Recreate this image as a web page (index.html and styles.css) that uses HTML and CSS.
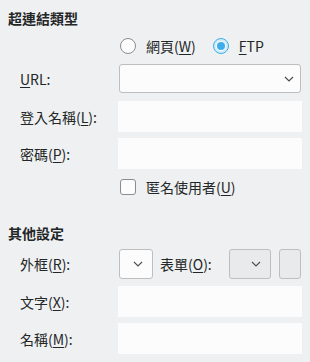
FILE: index.html
```html
<!DOCTYPE html>
<html lang="zh-Hant">
<head>
<meta charset="utf-8">
<link rel="stylesheet" href="styles.css">
</head>
<body>
<div class="page">
  <div class="section-title">超連結類型</div>

  <div class="row row-radio">
    <div class="label"></div>
    <div class="field radios">
      <span class="radio"></span><span class="opt-text">網頁(<u>W</u>)</span>
      <span class="radio checked"></span><span class="opt-text"><u>F</u>TP</span>
    </div>
  </div>

  <div class="row row-url">
    <div class="label"><u>U</u>RL:</div>
    <div class="field">
      <div class="combo wide">
        <svg class="chev" width="10" height="6" viewBox="0 0 10 6"><path d="M1 1 L5 5 L9 1" fill="none" stroke="#4d4d4d" stroke-width="1.2"/></svg>
      </div>
    </div>
  </div>

  <div class="row row-login">
    <div class="label">登入名稱(<u>L</u>):</div>
    <div class="field"><div class="input"></div></div>
  </div>

  <div class="row row-pass">
    <div class="label">密碼(<u>P</u>):</div>
    <div class="field"><div class="input"></div></div>
  </div>

  <div class="row row-check">
    <div class="label"></div>
    <div class="field checkrow">
      <span class="checkbox"></span><span class="opt-text">匿名使用者(<u>U</u>)</span>
    </div>
  </div>

  <div class="section-title second">其他設定</div>

  <div class="row row-frame">
    <div class="label">外框(<u>R</u>):</div>
    <div class="field framefield">
      <div class="combo small">
        <svg class="chev" width="10" height="6" viewBox="0 0 10 6"><path d="M1 1 L5 5 L9 1" fill="none" stroke="#4d4d4d" stroke-width="1.1"/></svg>
      </div>
      <span class="inline-label">表單(<u>O</u>):</span>
      <div class="combo btn">
        <svg class="chev" width="10" height="6" viewBox="0 0 10 6"><path d="M1 1 L5 5 L9 1" fill="none" stroke="#4d4d4d" stroke-width="1.1"/></svg>
      </div>
      <div class="btn-box"></div>
    </div>
  </div>

  <div class="row row-text">
    <div class="label">文字(<u>X</u>):</div>
    <div class="field"><div class="input"></div></div>
  </div>

  <div class="row row-name">
    <div class="label">名稱(<u>M</u>):</div>
    <div class="field"><div class="input"></div></div>
  </div>
</div>
</body>
</html>
```

FILE: styles.css
```css
html, body {
  margin: 0;
  padding: 0;
  background: #eff0f1;
}
body {
  font-family: "Noto Sans CJK TC", "Noto Sans", sans-serif;
  font-size: 14px;
  color: #232627;
  width: 310px;
  height: 362px;
  overflow: hidden;
}
.page {
  padding-top: 8px;
}
.section-title {
  font-weight: bold;
  line-height: 20px;
  height: 20px;
  padding-left: 8px;
}
.section-title.second {
  margin-top: 26px;
}
u {
  text-decoration: underline;
  text-underline-offset: 2px;
}
.row {
  display: flex;
  align-items: center;
  padding-left: 20px;
}
.label {
  width: 98px;
  flex: none;
  line-height: 20px;
  white-space: nowrap;
}
.field {
  width: 184px;
  flex: none;
  display: flex;
  align-items: center;
}
.row-radio { margin-top: 8px; height: 20px; }
.row-url { margin-top: 7px; height: 31px; }
.row-login { margin-top: 7px; height: 31px; }
.row-pass { margin-top: 6px; height: 31px; }
.row-check { margin-top: 8px; height: 20px; }
.row-frame { margin-top: 6px; height: 30px; }
.row-text { margin-top: 7px; height: 31px; }
.row-name { margin-top: 6px; height: 31px; }

.radios .radio {
  margin-left: 2px;
}
.radio {
  width: 14px;
  height: 14px;
  border: 1px solid #8a8d8f;
  border-radius: 50%;
  background: #fcfcfc;
  flex: none;
  position: relative;
}
.radio + .opt-text {
  margin-left: 10px;
}
.opt-text + .radio {
  margin-left: 17px;
}
.radio.checked {
  border-color: #3daee9;
  background: #d3ecf9;
}
.radio.checked::after {
  content: "";
  position: absolute;
  left: 3px;
  top: 3px;
  width: 8px;
  height: 8px;
  border-radius: 50%;
  background: #3daee9;
  box-shadow: 0 0 0 1px #fcfcfc;
}
.opt-text {
  line-height: 20px;
  white-space: nowrap;
}
.checkbox {
  width: 14px;
  height: 14px;
  margin-left: 2px;
  border: 1px solid #8a8d8f;
  border-radius: 3px;
  background: #fcfcfc;
  flex: none;
}
.checkbox + .opt-text {
  margin-left: 10px;
}
.combo {
  box-sizing: border-box;
  height: 29px;
  border: 1px solid #bcbebf;
  border-radius: 3px;
  background: #fcfcfc;
  display: flex;
  align-items: center;
  justify-content: flex-end;
  flex: none;
}
.combo.wide {
  width: 182px;
  margin-left: 1px;
}
.combo .chev {
  margin-right: 6px;
}
.input {
  width: 184px;
  height: 31px;
  background: #fcfcfc;
}
.framefield {
  height: 30px;
}
.combo.small {
  width: 34px;
  height: 30px;
  margin-left: 1px;
}
.combo.small .chev {
  margin-right: 9px;
}
.inline-label {
  margin-left: 7px;
  line-height: 20px;
  white-space: nowrap;
  width: 69px;
  flex: none;
}
.combo.btn {
  width: 42px;
  height: 30px;
  background: #e9eaeb;
}
.combo.btn .chev {
  margin-right: 9px;
}
.btn-box {
  box-sizing: border-box;
  width: 22px;
  height: 30px;
  margin-left: 8px;
  border: 1px solid #bcbebf;
  border-radius: 3px;
  background: #e9eaeb;
  flex: none;
}
```
